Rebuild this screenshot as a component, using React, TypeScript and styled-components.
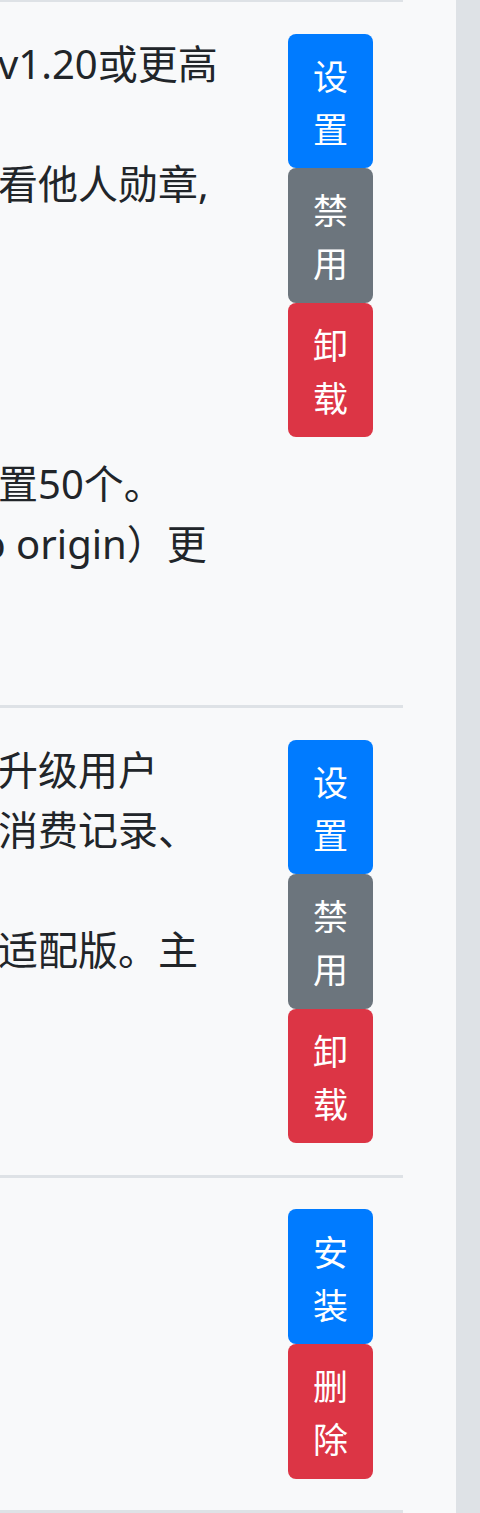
import React from "react";
import styled, { createGlobalStyle } from "styled-components";

type Variant = "primary" | "secondary" | "danger";

const colors: Record<Variant, string> = {
  primary: "#007bff",
  secondary: "#6c757d",
  danger: "#dc3545",
};

const GlobalStyle = createGlobalStyle`
  html, body {
    margin: 0;
    padding: 0;
  }
  body {
    background: #f8f9fa;
    color: #212529;
    font-family: "Noto Sans", "Noto Sans CJK SC", sans-serif;
  }
`;

const Page = styled.div`
  display: flex;
  width: 480px;
  min-height: 1513px;
`;

const Main = styled.main`
  flex: 0 0 456px;
  overflow: hidden;
  background: #f8f9fa;
`;

const Rail = styled.aside`
  flex: 1;
  background: #dee2e6;
`;

const Table = styled.div`
  width: 955px;
  margin-left: -552px;
  margin-top: -1px;
  border-bottom: 3px solid #dee2e6;
`;

const Row = styled.div`
  display: flex;
  border-top: 3px solid #dee2e6;
`;

const DescCell = styled.div`
  width: 750px;
  padding: 31.5px 30px;
`;

const Desc = styled.p`
  margin: 0 0 40px;
  font-size: 40px;
`;

const Line = styled.span`
  display: block;
  height: 60px;
  line-height: 60px;
  white-space: nowrap;
`;

const ActionCell = styled.div`
  width: 85px;
  padding: 31.5px 30px;
`;

const Btn = styled.button<{ $variant: Variant }>`
  display: block;
  box-sizing: border-box;
  width: 85px;
  height: 134.67px;
  padding: 14px 22px;
  border: 0;
  border-radius: 8px;
  background: ${(p) => colors[p.$variant]};
  color: #fff;
  font-family: "Noto Sans CJK SC", sans-serif;
  font-size: 35px;
  line-height: 53px;
  text-align: center;
  cursor: pointer;
`;

type Plugin = {
  lines: string[];
  actions: { label: string; variant: Variant }[];
};

const manage: Plugin["actions"] = [
  { label: "设置", variant: "primary" },
  { label: "禁用", variant: "secondary" },
  { label: "卸载", variant: "danger" },
];

const plugins: Plugin[] = [
  {
    lines: [
      "插件需要配合论坛主程序版本v1.20或更高",
      "才能正常使用。",
      "开启后用户可在个人主页中查看他人勋章,",
      "并可按获得时间排序。",
      "勋章图片支持自定义上传。",
      "后台可批量发放勋章。",
      "默认不限制发放数量。",
      "用户可展示的勋章数量默认设置50个。",
      "图片加载方式可选（return to origin）更",
      "快，节省服务器带宽。",
    ],
    actions: manage,
  },
  {
    lines: [
      "支持积分兑换会员组，并自动升级用户",
      "并提供充值记录、兑换记录、消费记录、",
      "积分日志等功能。",
      "插件同时提供手机端和电脑端适配版。主",
      "题风格可自由切换。",
    ],
    actions: manage,
  },
  {
    lines: ["一键签到插件，每日签到", "可获得积分奖励。"],
    actions: [
      { label: "安装", variant: "primary" },
      { label: "删除", variant: "danger" },
    ],
  },
];

const PluginRow = ({ plugin }: { plugin: Plugin }) => (
  <Row>
    <DescCell>
      <Desc>
        {plugin.lines.map((l, i) => (
          <Line key={i}>{l}</Line>
        ))}
      </Desc>
    </DescCell>
    <ActionCell>
      {plugin.actions.map((a) => (
        <Btn key={a.label} $variant={a.variant}>
          {a.label}
        </Btn>
      ))}
    </ActionCell>
  </Row>
);

const App = () => {
  return (
    <Page>
      <GlobalStyle />
      <Main>
        <Table>
          {plugins.map((p, i) => (
            <PluginRow key={i} plugin={p} />
          ))}
        </Table>
      </Main>
      <Rail />
    </Page>
  );
};

export default App;
